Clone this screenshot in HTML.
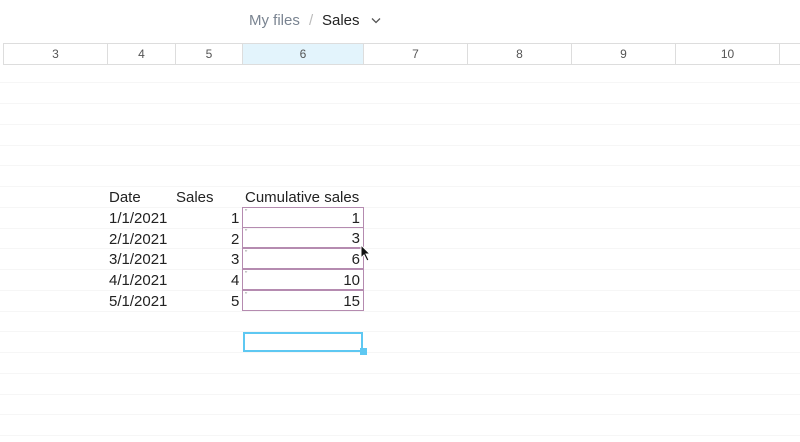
<!DOCTYPE html>
<html><head><style>
body{margin:0;width:800px;height:442px;background:#fff;position:relative;overflow:hidden;font-family:"Liberation Sans",sans-serif}
.t{position:absolute;white-space:nowrap}
.hl{position:absolute;left:0;width:800px;height:1px;background:#f6f6f6}
.hd{position:absolute;top:43px;height:22px;border-left:1px solid #ddd;border-top:1px solid #ddd;border-bottom:1px solid #ddd;font-size:12px;color:#555;text-align:center;line-height:21px;box-sizing:border-box}
.c{position:absolute;font-size:15px;color:#222;line-height:20px}
.b{position:absolute;left:242px;width:122px;height:21px;border:1px solid #b58bb0;box-sizing:border-box;text-align:right;padding-right:3px;font-size:15px;line-height:21px;color:#222}
.b:before{content:"\201D";position:absolute;left:2px;top:-6px;font-size:7px;color:#999}
</style></head><body>
<div class="t" style="left:249px;top:12px;font-size:15px;color:#7a8491">My files</div>
<div class="t" style="left:309px;top:12px;font-size:15px;color:#bbb">/</div>
<div class="t" style="left:322px;top:12px;font-size:15px;color:#222">Sales</div>
<svg style="position:absolute;left:371px;top:17px" width="10" height="7"><path d="M1 1.5L5 5.5L9 1.5" fill="none" stroke="#555" stroke-width="1.3"/></svg>
<div class="hd" style="left:3px;width:104px">3</div>
<div class="hd" style="left:107px;width:68px">4</div>
<div class="hd" style="left:175px;width:67px">5</div>
<div class="hd" style="left:242px;width:121px;background:#e3f4fc">6</div>
<div class="hd" style="left:363px;width:104px">7</div>
<div class="hd" style="left:467px;width:104px">8</div>
<div class="hd" style="left:571px;width:104px">9</div>
<div class="hd" style="left:675px;width:104px">10</div>
<div class="hd" style="left:779px;width:30px"></div>
<div class="hl" style="top:82px"></div><div class="hl" style="top:103px"></div><div class="hl" style="top:124px"></div><div class="hl" style="top:145px"></div><div class="hl" style="top:165px"></div><div class="hl" style="top:186px"></div><div class="hl" style="top:207px"></div><div class="hl" style="top:228px"></div><div class="hl" style="top:248px"></div><div class="hl" style="top:269px"></div><div class="hl" style="top:290px"></div><div class="hl" style="top:311px"></div><div class="hl" style="top:331px"></div><div class="hl" style="top:352px"></div><div class="hl" style="top:373px"></div><div class="hl" style="top:394px"></div><div class="hl" style="top:414px"></div><div class="hl" style="top:435px"></div>
<div class="c" style="left:109px;top:188px">Date</div>
<div class="c" style="left:176px;top:188px">Sales</div>
<div class="c" style="left:245px;top:188px">Cumulative sales</div>
<div class="c" style="left:109px;top:209px">1/1/2021</div><div class="c" style="left:231px;top:209px">1</div>
<div class="c" style="left:109px;top:230px">2/1/2021</div><div class="c" style="left:231px;top:230px">2</div>
<div class="c" style="left:109px;top:250px">3/1/2021</div><div class="c" style="left:231px;top:250px">3</div>
<div class="c" style="left:109px;top:271px">4/1/2021</div><div class="c" style="left:231px;top:271px">4</div>
<div class="c" style="left:109px;top:292px">5/1/2021</div><div class="c" style="left:231px;top:292px">5</div>
<div class="b" style="top:207px">1</div>
<div class="b" style="top:227px">3</div>
<div class="b" style="top:248px">6</div>
<div class="b" style="top:269px">10</div>
<div class="b" style="top:290px">15</div>
<div style="position:absolute;left:243px;top:332px;width:120px;height:20px;border:2px solid #5ec8f2;box-sizing:border-box"></div>
<div style="position:absolute;left:360px;top:348px;width:7px;height:7px;background:#5ec8f2"></div>
<svg style="position:absolute;left:360px;top:244px" width="12" height="18"><path d="M1 1L1 14L4 11L7 17L9 16L6 10L10 10Z" fill="#111" stroke="#fff" stroke-width="1"/></svg>
</body></html>
